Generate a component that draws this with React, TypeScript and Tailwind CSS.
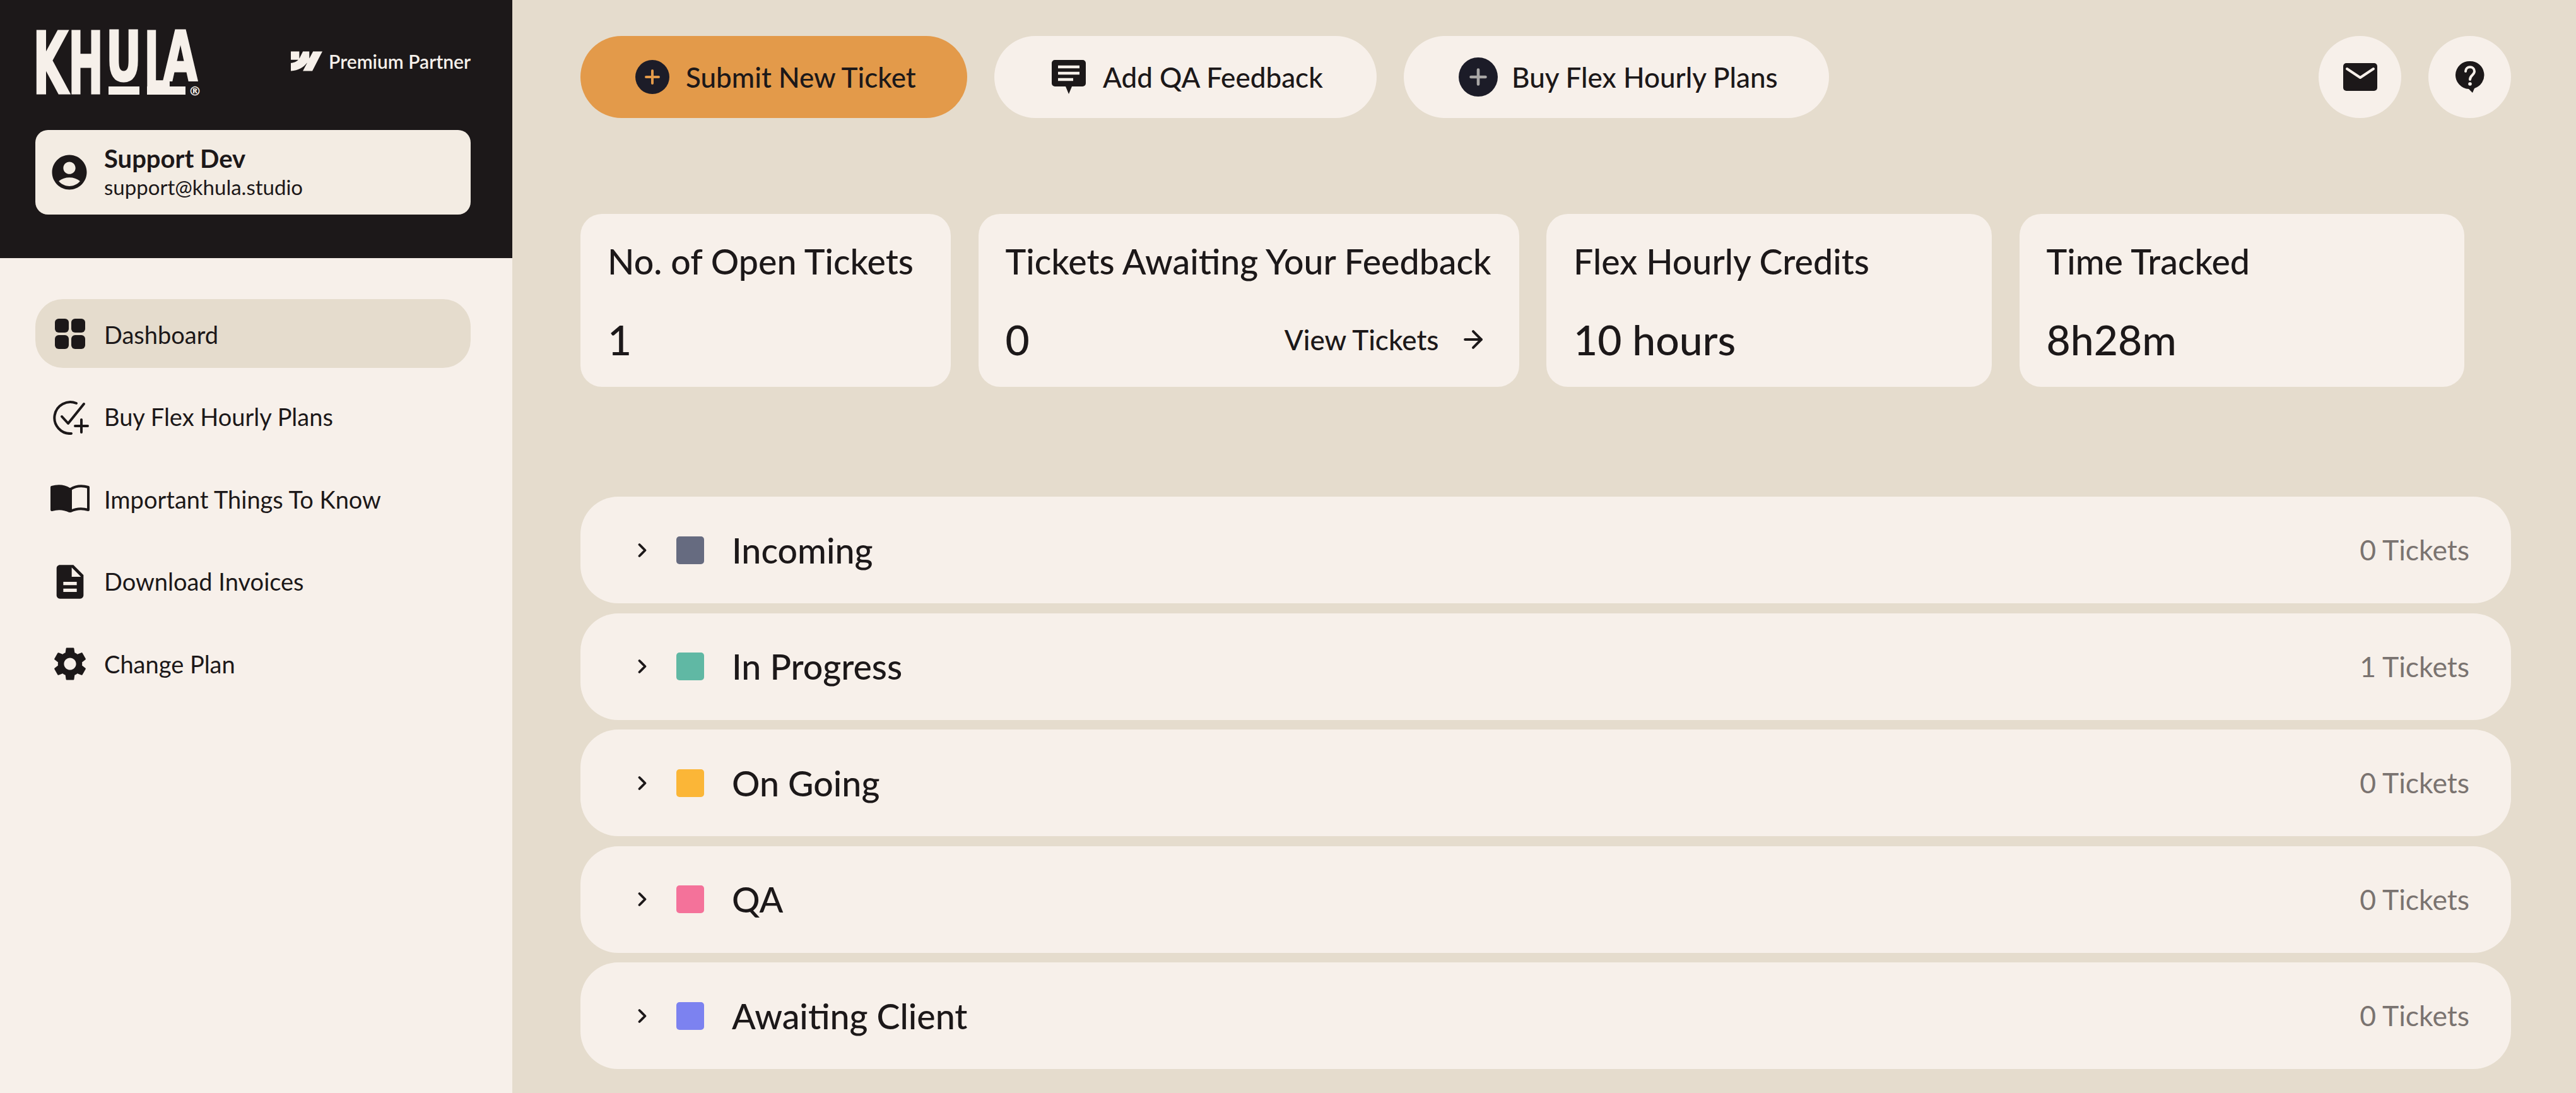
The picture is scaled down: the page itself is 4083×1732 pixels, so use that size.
import { ArrowRight, ChevronRight } from 'lucide-react';
import { MdAccountCircle, MdDescription, MdSettings } from 'react-icons/md';
import { SiWebflow } from 'react-icons/si';

const font = "font-['Lato','Liberation_Sans',sans-serif]";

function KhulaLogo() {
  return (
    <svg width="262" height="107" viewBox="0 0 262 107" className="shrink-0 overflow-visible font-['DejaVu_Sans',sans-serif] font-bold" fill="#f6f0ea" stroke="#f6f0ea" strokeWidth="3">
      <rect x="116" y="92" width="49" height="13" stroke="none" />
      <rect x="177" y="92" width="61" height="13" stroke="none" />
      <text>
        <tspan x="-4" y="103" fontSize="136" textLength="56" lengthAdjust="spacingAndGlyphs">K</tspan>
        <tspan x="52" y="103" fontSize="136" textLength="56" lengthAdjust="spacingAndGlyphs">H</tspan>
        <tspan x="112" y="82" fontSize="108" textLength="56" lengthAdjust="spacingAndGlyphs">U</tspan>
        <tspan x="172" y="103" fontSize="136" textLength="42" lengthAdjust="spacingAndGlyphs">L</tspan>
        <tspan x="203" y="82" fontSize="108" textLength="54" lengthAdjust="spacingAndGlyphs">A</tspan>
        <tspan x="243" y="106" fontSize="20" strokeWidth="0">®</tspan>
      </text>
    </svg>
  );
}

function GridIcon() {
  return (
    <svg viewBox="0 0 54 54" className="w-[54px] h-[54px]" fill="#1c1819">
      <rect x="3" y="2" width="22" height="22" rx="6" />
      <rect x="29" y="2" width="22" height="22" rx="6" />
      <rect x="3" y="28" width="22" height="22" rx="6" />
      <rect x="29" y="28" width="22" height="22" rx="6" />
    </svg>
  );
}

function CheckPlusIcon() {
  return (
    <svg viewBox="0 0 60 56" className="w-[60px] h-[56px]" fill="none" stroke="#1c1819" strokeWidth="4" strokeLinecap="round" strokeLinejoin="round">
      <path d="M32 54 A25 25 0 1 1 40 6" />
      <path d="M17 27 L27 38 L52 7" />
      <path d="M48 32 V52 M38 42 H58" />
    </svg>
  );
}

function BookIcon() {
  return (
    <svg viewBox="0 0 62 46" className="w-[62px] h-[46px]" fill="none" stroke="#1c1819" strokeWidth="4" strokeLinejoin="round">
      <path d="M2 4 C12 1 22 2 30 7 V42 C22 38 12 37 2 40 Z" fill="#1c1819" />
      <path d="M32 7 C40 2 50 1 60 4 V40 C50 37 40 38 32 42 Z" />
    </svg>
  );
}

function ChatIcon() {
  return (
    <svg viewBox="0 0 56 56" className="w-[56px] h-[56px] shrink-0">
      <path d="M6 1 H50 A5 5 0 0 1 55 6 V38 A5 5 0 0 1 50 43 H33 L28 55 L23 43 H6 A5 5 0 0 1 1 38 V6 A5 5 0 0 1 6 1 Z" fill="#1c1819" />
      <path d="M11 12 H45 M11 22 H45 M11 32 H35" stroke="#f7f0ea" strokeWidth="4.5" />
    </svg>
  );
}

function MailIcon() {
  return (
    <svg viewBox="0 0 56 46" className="w-[56px] h-[46px]">
      <rect x="1" y="1" width="54" height="44" rx="5" fill="#1c1819" />
      <path d="M7 10 L28 24 L49 10" fill="none" stroke="#f7f0ea" strokeWidth="4" strokeLinecap="round" strokeLinejoin="round" />
    </svg>
  );
}

function HelpIcon() {
  return (
    <svg viewBox="0 0 46 52" className="w-[46px] h-[52px]">
      <path d="M23 1 A22 22 0 0 1 30 44 L27 51 L21 45 A22 22 0 0 1 23 1 Z" fill="#1c1819" />
      <path d="M16 17 C16 8 30 8 30 17 C30 23 23 23 23 30" fill="none" stroke="#f7f0ea" strokeWidth="4" strokeLinecap="round" />
      <circle cx="23" cy="37" r="2.8" fill="#f7f0ea" />
    </svg>
  );
}

function PlusCircle({ size, color }: { size: string; color: string }) {
  return (
    <svg viewBox="0 0 54 54" className={`${size} shrink-0`}>
      <circle cx="27" cy="27" r="27" fill="#1c1c28" />
      <path d="M27 17 V37 M17 27 H37" stroke={color} strokeWidth="4" strokeLinecap="round" />
    </svg>
  );
}

const navItems = [
  { label: 'Dashboard', icon: <GridIcon />, active: true },
  { label: 'Buy Flex Hourly Plans', icon: <CheckPlusIcon /> },
  { label: 'Important Things To Know', icon: <BookIcon /> },
  { label: 'Download Invoices', icon: <MdDescription className="w-[64px] h-[64px] text-[#1c1819]" /> },
  { label: 'Change Plan', icon: <MdSettings className="w-[64px] h-[64px] text-[#1c1819]" /> },
];

const stats = [
  { title: 'No. of Open Tickets', value: '1', width: 'w-[587px]' },
  { title: 'Tickets Awaiting Your Feedback', value: '0', width: 'w-[857px]', link: true },
  { title: 'Flex Hourly Credits', value: '10 hours', width: 'w-[706px]' },
  { title: 'Time Tracked', value: '8h28m', width: 'w-[705px]' },
];

const columns = [
  { name: 'Incoming', color: 'bg-[#666b80]', count: 0 },
  { name: 'In Progress', color: 'bg-[#60b8a4]', count: 1 },
  { name: 'On Going', color: 'bg-[#fbb637]', count: 0 },
  { name: 'QA', color: 'bg-[#f4729a]', count: 0 },
  { name: 'Awaiting Client', color: 'bg-[#7c82f0]', count: 0 },
];

export default function App() {
  return (
    <div className={`flex w-[4083px] h-[1732px] overflow-hidden bg-[#e5dccd] text-[#1c1819] ${font}`}>
      {/* Sidebar */}
      <aside className="w-[812px] shrink-0 bg-[#f7f0ea]">
        <div className="h-[409px] bg-[#1c1819] pl-[56px] pr-[66px] pt-[45px]">
          <div className="flex justify-between">
            <KhulaLogo />
            <div className="flex items-center gap-[10px] h-[104px] text-[#f6f0ea]">
              <SiWebflow className="w-[50px] h-[50px]" />
              <span className="text-[30px] font-semibold">Premium Partner</span>
            </div>
          </div>
          <div className="mt-[54px] h-[134px] rounded-[20px] bg-[#f3ece3] flex items-center pl-[21px] gap-[22px]">
            <MdAccountCircle className="w-[66px] h-[66px] text-[#1c1819]" />
            <div>
              <div className="text-[40px] font-bold leading-[46px]">Support Dev</div>
              <div className="text-[33px] leading-[44px]">support@khula.studio</div>
            </div>
          </div>
        </div>
        <nav className="pl-[56px] pr-[66px] pt-[65px] flex flex-col gap-[22px]">
          {navItems.map((item) => (
            <div
              key={item.label}
              className={`h-[108.5px] pt-[4px] rounded-[44px] flex items-center ${item.active ? 'bg-[#e5dccd]' : ''}`}
            >
              <span className="w-[109px] shrink-0 flex justify-center">{item.icon}</span>
              <span className="text-[38px]">{item.label}</span>
            </div>
          ))}
        </nav>
      </aside>

      {/* Main */}
      <main className="flex-1 pl-[108px] pr-[103px] pt-[57px]">
        <div className="flex gap-[43px]">
          <button className="w-[613px] h-[130px] rounded-full bg-[#e39a4a] flex items-center pl-[87px] gap-[26px] text-[44px] font-medium">
            <PlusCircle size="w-[54px] h-[54px]" color="#e39a4a" />
            Submit New Ticket
          </button>
          <button className="w-[606px] h-[130px] rounded-full bg-[#f7f0ea] flex items-center pl-[90px] gap-[26px] text-[44px] font-medium">
            <ChatIcon />
            Add QA Feedback
          </button>
          <button className="w-[674px] h-[130px] rounded-full bg-[#f7f0ea] flex items-center pl-[87px] gap-[22px] text-[44px] font-medium">
            <PlusCircle size="w-[62px] h-[62px]" color="#a9a7a6" />
            Buy Flex Hourly Plans
          </button>
          <div className="ml-auto flex gap-[43px]">
            <span className="w-[131px] h-[130px] rounded-full bg-[#f7f0ea] flex items-center justify-center">
              <MailIcon />
            </span>
            <span className="w-[131px] h-[130px] rounded-full bg-[#f7f0ea] flex items-center justify-center">
              <HelpIcon />
            </span>
          </div>
        </div>

        <div className="mt-[152px] flex gap-[43.5px]">
          {stats.map((stat) => (
            <div key={stat.title} className={`${stat.width} h-[274px] rounded-[34px] bg-[#f7f0ea] pl-[43px] pr-[44px] pt-[40px]`}>
              <div className="text-[55.5px] font-medium leading-[70px] whitespace-nowrap">{stat.title}</div>
              <div className="mt-[49px] flex items-center justify-between">
                <span className="text-[66px] font-medium leading-[80px]">{stat.value}</span>
                {stat.link && (
                  <span className="flex items-center gap-[32px] mr-[7px] text-[44px] font-medium">
                    View Tickets
                    <ArrowRight className="w-[44px] h-[44px]" strokeWidth={2.2} />
                  </span>
                )}
              </div>
            </div>
          ))}
        </div>

        <div className="mt-[174px] flex flex-col gap-[15.5px]">
          {columns.map((col) => (
            <div key={col.name} className="h-[169px] rounded-[60px] bg-[#f7f0ea] flex items-center pl-[80px] pr-[66px]">
              <ChevronRight className="w-[36px] h-[36px]" strokeWidth={2.5} />
              <span className={`w-[44px] h-[44px] rounded-[5px] ml-[36px] ${col.color}`} />
              <span className="ml-[44px] text-[55.5px] font-medium">{col.name}</span>
              <span className="ml-auto text-[44.5px] text-[#7a7370]">{col.count} Tickets</span>
            </div>
          ))}
        </div>
      </main>
    </div>
  );
}
